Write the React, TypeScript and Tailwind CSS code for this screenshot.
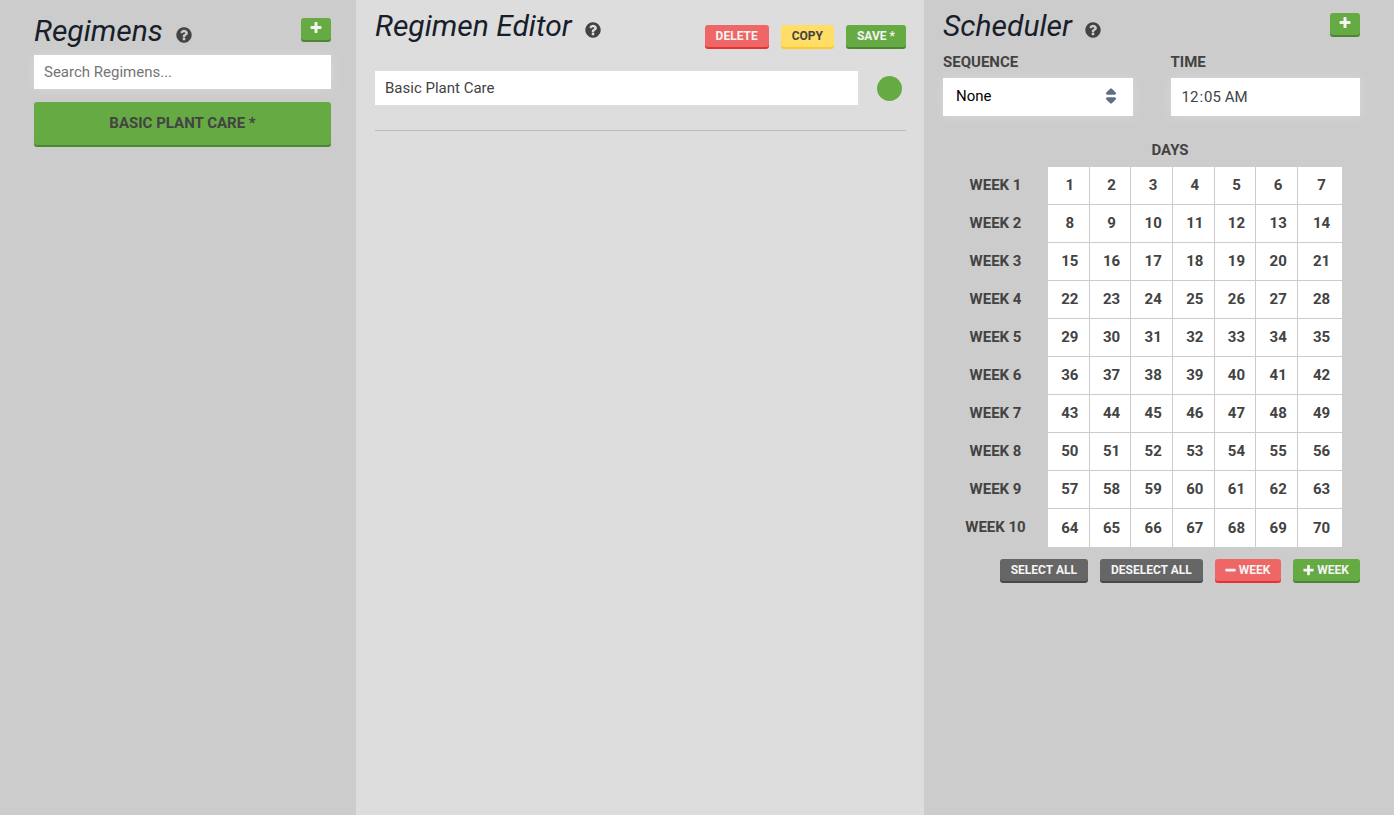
import React from "react";

const ICONS = {
	plus: "M1600 736v192q0 40-28 68t-68 28h-416v416q0 40-28 68t-68 28h-192q-40 0-68-28t-28-68v-416h-416q-40 0-68-28t-28-68v-192q0-40 28-68t68-28h416v-416q0-40 28-68t68-28h192q40 0 68 28t28 68v416h416q40 0 68 28t28 68z",
	minus: "M1600 736v192q0 40-28 68t-68 28h-1216q-40 0-68-28t-28-68v-192q0-40 28-68t68-28h1216q40 0 68 28t28 68z",
	help: "M1024 1376v-192q0-14-9-23t-23-9h-192q-14 0-23 9t-9 23v192q0 14 9 23t23 9h192q14 0 23-9t9-23zm256-672q0-88-55.5-163t-138.5-116-170-41q-243 0-371 213-15 24 8 42l132 100q7 6 19 6 16 0 25-12 53-68 86-92 34-24 86-24 48 0 85.5 26t37.5 59q0 38-20 61t-68 45q-63 28-115.5 86.5t-52.5 125.5v36q0 14 9 23t23 9h192q14 0 23-9t9-23q0-19 21.5-49.5t54.5-49.5q32-18 49-28.5t46-35 44.5-48 28-60.5 12.5-81zm384 192q0 209-103 385.5t-279.5 279.5-385.5 103-385.5-103-279.5-279.5-103-385.5 103-385.5 279.5-279.5 385.5-103 385.5 103 279.5 279.5 103 385.5z",
};

const COLORS = {
	green: "bg-[#66aa44] text-[#f4f4f4] shadow-[0_2px_0_#4c8533]",
	red: "bg-[#ee6666] text-[#f4f4f4] shadow-[0_2px_0_#e63232]",
	yellow: "bg-[#ffdd66] text-[#434343] shadow-[0_2px_0_#fccb28]",
	gray: "bg-[#666666] text-[#f4f4f4] shadow-[0_2px_0_#4a4a4a]",
};

function Icon({ name, className }: { name: keyof typeof ICONS; className: string }) {
	return (
		<svg viewBox="0 0 1792 1792" fill="currentColor" className={className} aria-hidden="true">
			<path d={ICONS[name]} />
		</svg>
	);
}

interface ButtonProps {
	color: keyof typeof COLORS;
	label?: string;
	onClick?: () => void;
	children: React.ReactNode;
}

function Button({ color, label, onClick, children }: ButtonProps) {
	return (
		<button
			type="button"
			aria-label={label}
			onClick={onClick}
			className={`flex h-[22px] items-center rounded-[3px] px-[11px] text-[12px] leading-5 font-bold uppercase ${COLORS[color]}`}
		>
			{children}
		</button>
	);
}

function Title({ children }: { children: React.ReactNode }) {
	return (
		<div className="flex items-center gap-3">
			<h3 className="text-[30px] leading-[38px] text-[#17202a] italic">{children}</h3>
			<button type="button" aria-label="Help" className="mt-2">
				<Icon name="help" className="size-[18px]" />
			</button>
		</div>
	);
}

function Regimens() {
	return (
		<aside className="bg-[#cccccc] pt-3 pr-[25px] pl-[34px]">
			<div className="flex items-start justify-between">
				<Title>Regimens</Title>
				<div className="mt-[6px]">
					<Button color="green" label="Add regimen">
						<Icon name="plus" className="-mx-[3px] mb-[3px] size-[14px]" />
					</Button>
				</div>
			</div>
			<input
				type="text"
				aria-label="Search regimens"
				placeholder="Search Regimens..."
				className="mt-[5px] block h-[34px] w-full bg-white px-[10px] text-[15px] shadow-[0_0_10px_#d8d8d8] placeholder:text-[#757575]"
			/>
			<button
				type="button"
				className="mt-[13px] h-[43px] w-full rounded-[3px] bg-[#66aa44] text-[15px] font-bold uppercase shadow-[0_2px_0_#4c8533]"
			>
				Basic Plant Care *
			</button>
		</aside>
	);
}

function RegimenEditor() {
	const [name, setName] = React.useState("Basic Plant Care");

	return (
		<main className="bg-[#dddddd] pt-[7px] pr-[18px] pl-[19px]">
			<div className="flex items-start justify-between">
				<Title>Regimen Editor</Title>
				<div className="mt-[18px] flex gap-3">
					<Button color="red">Delete</Button>
					<Button color="yellow">Copy</Button>
					<Button color="green">Save *</Button>
				</div>
			</div>
			<div className="mt-6 flex items-center border-b border-[#bbbbbb] pb-[25px]">
				<input
					type="text"
					aria-label="Regimen name"
					value={name}
					onChange={(e) => setName(e.target.value)}
					className="h-[34px] min-w-0 flex-1 bg-white px-[10px] text-[15px]"
				/>
				<button
					type="button"
					aria-label="Regimen color"
					className="mr-1 ml-[19px] size-[25px] rounded-full bg-[#66aa44]"
				/>
			</div>
		</main>
	);
}

function Scheduler() {
	const [weeks, setWeeks] = React.useState(10);
	const [selected, setSelected] = React.useState(new Array<number>());

	const toggleDay = (day: number) => {
		setSelected(selected.includes(day) ? selected.filter((d) => d !== day) : [...selected, day]);
	};

	return (
		<aside className="bg-[#cccccc] pt-[7px] pr-[34px] pl-[19px]">
			<div className="flex items-start justify-between">
				<Title>Scheduler</Title>
				<div className="mt-[6px]">
					<Button color="green" label="Add to regimen">
						<Icon name="plus" className="-mx-[3px] mb-[3px] size-[14px]" />
					</Button>
				</div>
			</div>
			<div className="mt-[6px] grid grid-cols-2 gap-[38px]">
				<div>
					<label htmlFor="sequence" className="block text-[15px] leading-[22px] font-bold uppercase">
						Sequence
					</label>
					<div className="relative mt-[5px]">
						<select
							id="sequence"
							className="block h-[38px] w-full appearance-none bg-white px-[13px] pb-[2px] text-[15px] text-black shadow-[0_0_10px_#d8d8d8]"
						>
							<option>None</option>
						</select>
						<svg
							viewBox="0 0 16 16"
							fill="#5c7080"
							className="pointer-events-none absolute top-2 right-3 size-5"
							aria-hidden="true"
						>
							<path d="M5 7h6a1.003 1.003 0 00.71-1.71l-3-3C8.53 2.11 8.28 2 8 2s-.53.11-.71.29l-3 3A1.003 1.003 0 005 7zm6 2H5a1.003 1.003 0 00-.71 1.71l3 3c.18.18.43.29.71.29s.53-.11.71-.29l3-3A1.003 1.003 0 0011 9z" />
						</svg>
					</div>
				</div>
				<div>
					<label htmlFor="time" className="block text-[15px] leading-[22px] font-bold uppercase">
						Time
					</label>
					<input
						id="time"
						type="time"
						defaultValue="00:05"
						className="mt-[5px] block h-[38px] w-full bg-white px-[10px] text-[15px] shadow-[0_0_10px_#d8d8d8] [&::-webkit-calendar-picker-indicator]:hidden"
					/>
				</div>
			</div>
			<div id="days" className="mt-[23px] pl-[37px] text-center text-[15px] leading-[22px] font-bold uppercase">
				Days
			</div>
			<div className="mt-[6px] pr-[18px]">
				<table
					aria-labelledby="days"
					className="w-full table-fixed border-separate border-spacing-0 text-[15px] font-bold"
				>
					<tbody>
						{Array.from({ length: weeks }, (_, week) => (
							<tr key={week} className="group">
								<th scope="row" className="h-[38px] w-[105px] p-0 pb-[2px] uppercase">
									Week {week + 1}
								</th>
								{Array.from({ length: 7 }, (_, i) => week * 7 + i + 1).map((day) => (
									<td
										key={day}
										className="h-[38px] border-r border-b border-[#cccccc] bg-white p-0 group-last:border-b-0 last:w-[44px] last:border-r-0"
									>
										<button
											type="button"
											aria-pressed={selected.includes(day)}
											onClick={() => toggleDay(day)}
											className="block h-[37px] w-full pl-[3px] aria-pressed:bg-[#66aa44] aria-pressed:text-white"
										>
											{day}
										</button>
									</td>
								))}
							</tr>
						))}
					</tbody>
				</table>
			</div>
			<div className="mt-3 flex justify-end gap-3">
				<Button
					color="gray"
					onClick={() => setSelected(Array.from({ length: weeks * 7 }, (_, i) => i + 1))}
				>
					Select all
				</Button>
				<Button color="gray" onClick={() => setSelected([])}>
					Deselect all
				</Button>
				<Button color="red" onClick={() => setWeeks(Math.max(1, weeks - 1))}>
					<Icon name="minus" className="-ml-[2px] mr-[2px] size-[13px]" />
					Week
				</Button>
				<Button color="green" onClick={() => setWeeks(weeks + 1)}>
					<Icon name="plus" className="-ml-[2px] mr-[2px] size-[13px]" />
					Week
				</Button>
			</div>
		</aside>
	);
}

function App() {
	return (
		<div className="grid min-h-screen grid-cols-[356fr_568fr_470fr] font-[Roboto,sans-serif] text-[#434343]">
			<Regimens />
			<RegimenEditor />
			<Scheduler />
		</div>
	);
}

export default App;
